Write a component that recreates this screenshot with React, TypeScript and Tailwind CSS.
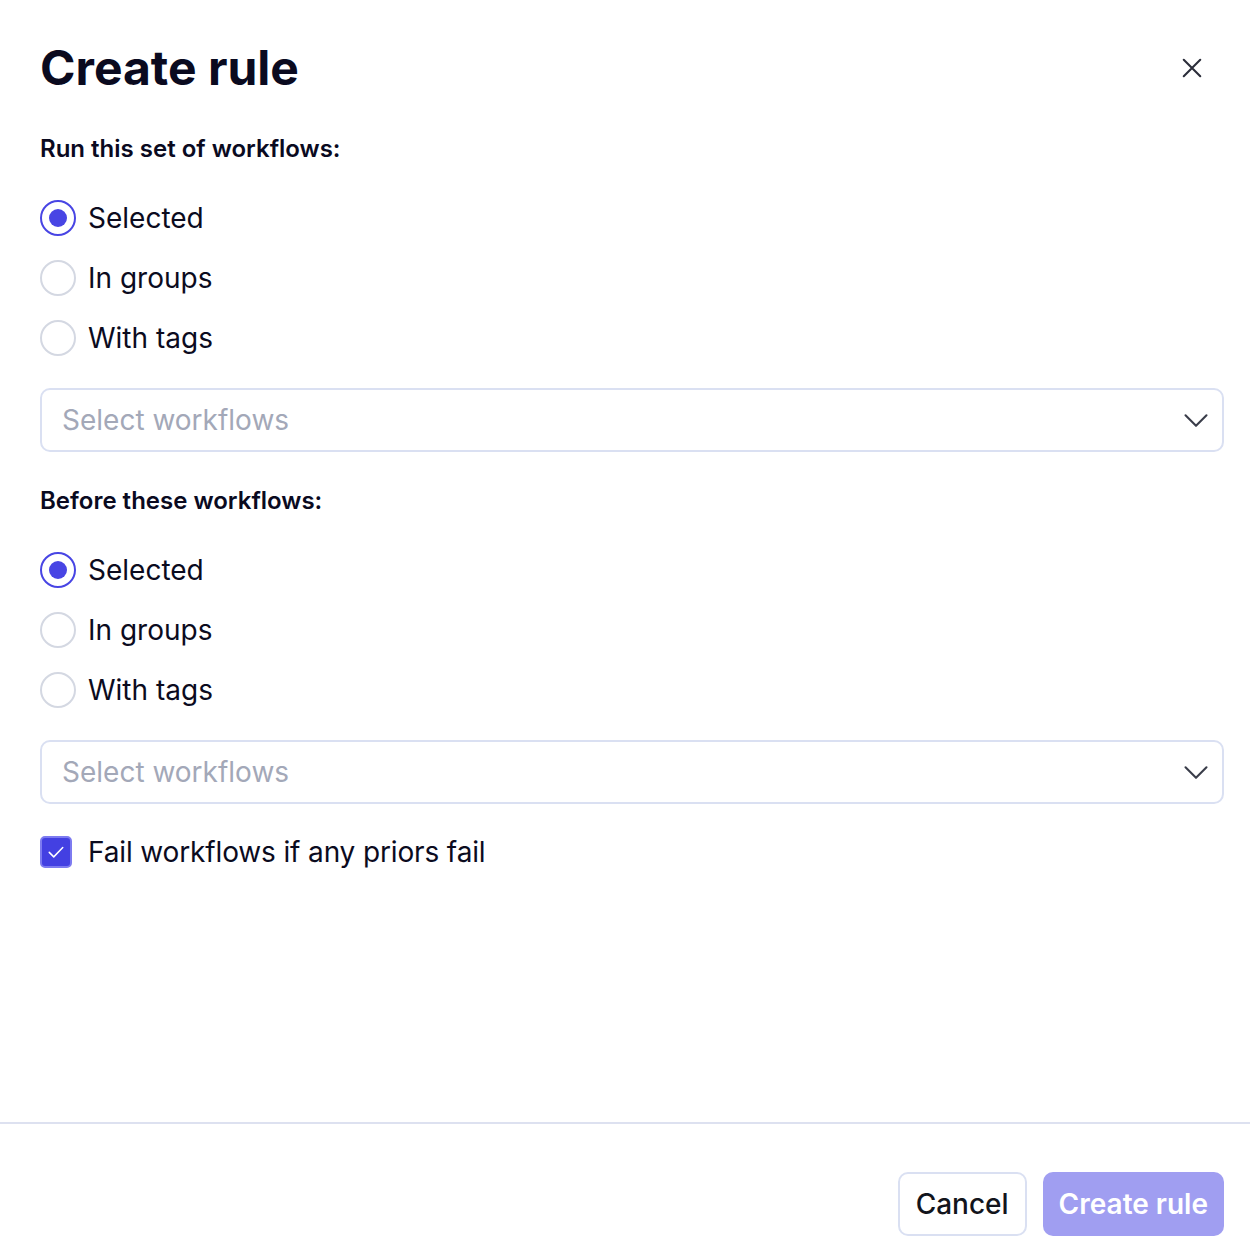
import { useState } from 'react';

type Choice = 'selected' | 'groups' | 'tags';

const choices: { value: Choice; label: string }[] = [
    { value: 'selected', label: 'Selected' },
    { value: 'groups', label: 'In groups' },
    { value: 'tags', label: 'With tags' },
];

// ── Radio group ────────────────────────────────────────────────────────────────

function RadioGroup({ value, onChange }: { value: Choice; onChange: (v: Choice) => void }) {
    return (
        <div className="flex flex-col gap-6 mt-[35px]">
            {choices.map(c => {
                const checked = c.value === value;
                return (
                    <button
                        key={c.value}
                        onClick={() => onChange(c.value)}
                        className="flex items-center gap-3 text-left"
                    >
                        <span
                            className={
                                checked
                                    ? 'flex items-center justify-center w-9 h-9 rounded-full border-2 border-[#4845e4] bg-white'
                                    : 'flex items-center justify-center w-9 h-9 rounded-full border-2 border-[#d4d8e2] bg-white'
                            }
                        >
                            {checked && <span className="w-[18px] h-[18px] rounded-full bg-[#4845e4]" />}
                        </span>
                        <span className="text-[28px] leading-9 text-[#0b0b1e]">{c.label}</span>
                    </button>
                );
            })}
        </div>
    );
}

// ── Select field ───────────────────────────────────────────────────────────────

function WorkflowSelect() {
    return (
        <div className="mt-8 flex items-center justify-between h-16 rounded-[10px] border-2 border-[#dae0f2] pl-[20px] pr-[12px]">
            <span className="text-[28px] text-[#a3a8b8]">Select workflows</span>
            <svg width="28" height="28" viewBox="0 0 24 24" fill="none" stroke="#3a3d4a" strokeWidth="1.8" strokeLinecap="round" strokeLinejoin="round">
                <path d="M3 8l9 9 9-9" />
            </svg>
        </div>
    );
}

export default function App() {
    const [first, setFirst] = useState<Choice>('selected');
    const [second, setSecond] = useState<Choice>('selected');
    const [failOnPrior, setFailOnPrior] = useState(true);

    return (
        <div className="w-[1250px] h-[1254px] bg-white flex flex-col font-['Inter',sans-serif]">
            <div className="flex-1 pl-10 pr-[26px] pt-[38px]">
                {/* Header */}
                <div className="flex items-center justify-between">
                    <h1 className="text-[48px] leading-[60px] font-bold text-[#0a0a1f]">Create rule</h1>
                    <button className="mr-[21px] text-[#2b2d3a]">
                        <svg width="22" height="22" viewBox="0 0 24 24" fill="none" stroke="currentColor" strokeWidth="2.3" strokeLinecap="round">
                            <path d="M3 3l18 18M21 3L3 21" />
                        </svg>
                    </button>
                </div>

                <h2 className="mt-[35px] text-[24px] leading-8 font-semibold text-[#0a0a1f]">Run this set of workflows:</h2>
                <RadioGroup value={first} onChange={setFirst} />
                <WorkflowSelect />

                <h2 className="mt-[33px] text-[24px] leading-8 font-semibold text-[#0a0a1f]">Before these workflows:</h2>
                <RadioGroup value={second} onChange={setSecond} />
                <WorkflowSelect />

                {/* Fail toggle */}
                <button onClick={() => setFailOnPrior(v => !v)} className="mt-[30px] flex items-center gap-4 text-left">
                    <span
                        className={
                            failOnPrior
                                ? 'flex items-center justify-center w-8 h-8 rounded-[5px] bg-[#4340e2] border-2 border-[#7d7bf0]'
                                : 'flex items-center justify-center w-8 h-8 rounded-[5px] bg-white border-2 border-[#d4d8e2]'
                        }
                    >
                        {failOnPrior && (
                            <svg width="18" height="18" viewBox="0 0 24 24" fill="none" stroke="white" strokeWidth="2" strokeLinecap="round" strokeLinejoin="round">
                                <path d="M3 12.5l6 6L21 6" />
                            </svg>
                        )}
                    </span>
                    <span className="text-[28px] leading-9 text-[#0b0b1e] tracking-[-0.005em]">Fail workflows if any priors fail</span>
                </button>
            </div>

            {/* Footer */}
            <div className="border-t-2 border-[#dde1f0] h-[132px] flex items-start justify-end gap-4 pt-[48px] pr-[26px]">
                <button className="h-16 px-[16px] rounded-[10px] border-2 border-[#dae0f2] text-[28px] font-medium text-[#12141c]">
                    Cancel
                </button>
                <button className="h-16 px-[16px] rounded-[10px] bg-[#a09ef1] text-[28px] font-semibold text-white">
                    Create rule
                </button>
            </div>
        </div>
    );
}
